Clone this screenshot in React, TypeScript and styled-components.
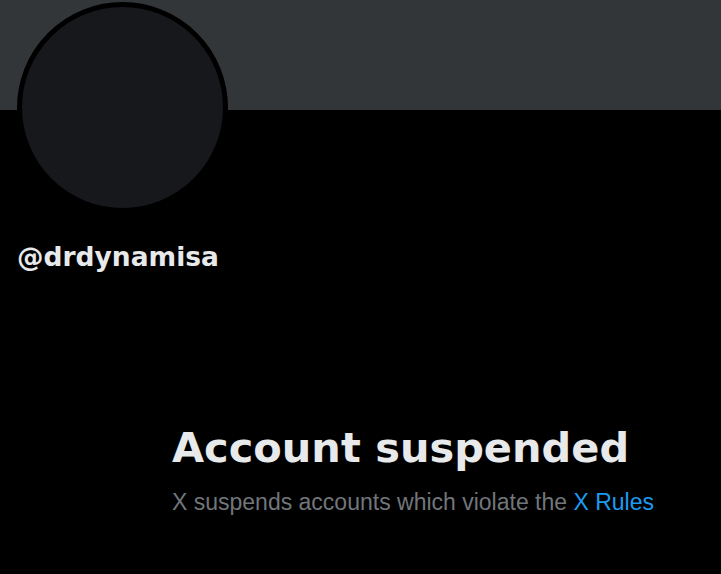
import React from "react";
import styled, { createGlobalStyle } from "styled-components";

const Global = createGlobalStyle`
  html, body { margin: 0; padding: 0; background: #000; }
  body { font-family: "Liberation Sans", Arial, sans-serif; color: #e7e9ea; }
`;

const Page = styled.div`
  width: 721px;
  height: 574px;
  background: #000;
  overflow: hidden;
  display: flex;
  flex-direction: column;
`;

const Banner = styled.div`
  height: 110px;
  background: #333639;
  flex-shrink: 0;
`;

const ProfileHead = styled.div`
  padding: 0 0 0 17px;
  display: flex;
  flex-direction: column;
`;

const Avatar = styled.div`
  width: 201px;
  height: 201px;
  border-radius: 50%;
  background: #16181c;
  border: 5px solid #000;
  margin-top: -108px;
`;

const Handle = styled.div`
  margin-top: 28px;
  font-family: "DejaVu Sans", sans-serif;
  font-size: 26.5px;
  font-weight: 700;
  line-height: 32px;
  color: #e7e9ea;
`;

const Notice = styled.div`
  display: flex;
  flex-direction: column;
  padding-left: 172px;
  margin-top: 151px;
`;

const Title = styled.h1`
  margin: 0;
  font-family: "DejaVu Sans", sans-serif;
  font-size: 41.5px;
  font-weight: 700;
  line-height: 48px;
  color: #e7e9ea;
`;

const Sub = styled.p`
  margin: 16px 0 0;
  font-family: "Liberation Sans", Arial, sans-serif;
  font-size: 23px;
  line-height: 28px;
  color: #71767b;
`;

const Link = styled.a`
  color: #1d9bf0;
  text-decoration: none;
`;

export default function App() {
  return (
    <Page>
      <Global />
      <Banner />
      <ProfileHead>
        <Avatar />
        <Handle>@drdynamisa</Handle>
      </ProfileHead>
      <Notice>
        <Title>Account suspended</Title>
        <Sub>
          X suspends accounts which violate the <Link href="#">X Rules</Link>
        </Sub>
      </Notice>
    </Page>
  );
}
